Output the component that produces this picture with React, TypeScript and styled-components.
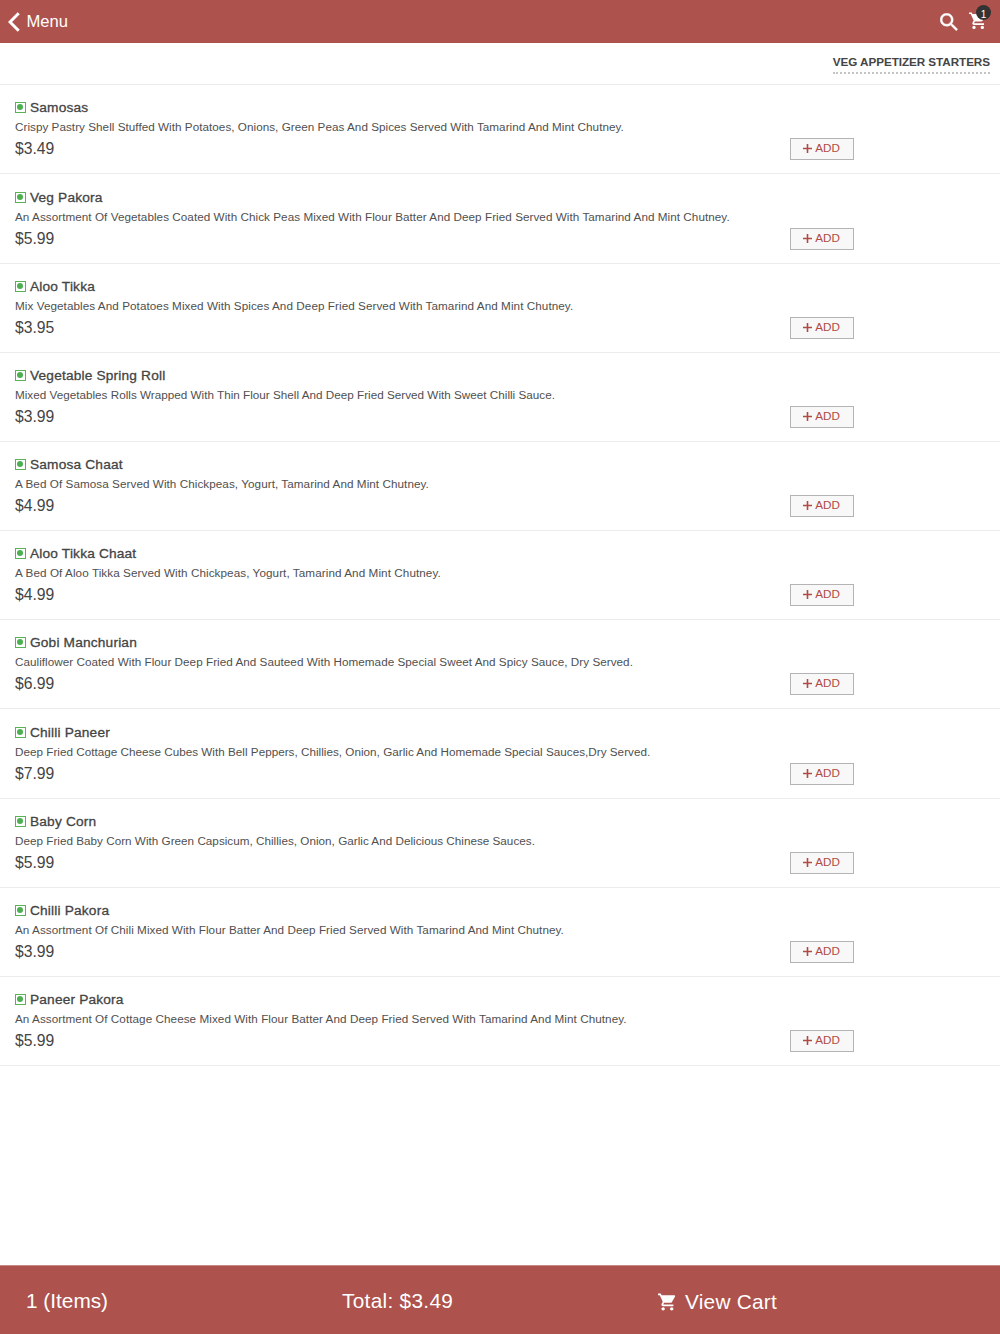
import React from "react";
import styled, { createGlobalStyle } from "styled-components";

const GlobalStyle = createGlobalStyle`
  * { box-sizing: border-box; }
  body {
    margin: 0;
    background: #fff;
    color: #444;
    font-family: "Liberation Sans", Arial, Helvetica, sans-serif;
  }
  button { font-family: inherit; }
`;

const Screen = styled.div`
  display: flex;
  flex-direction: column;
  width: 1000px;
  height: 1334px;
  background: #fff;
`;

const TopBar = styled.header`
  display: flex;
  align-items: center;
  justify-content: space-between;
  flex: none;
  height: 43px;
  padding: 0 13px 0 8px;
  background: #ad524c;
  color: #fff;
`;

const BackLink = styled.button`
  display: flex;
  align-items: center;
  gap: 6.5px;
  padding: 0;
  border: 0;
  background: none;
  color: inherit;
  font-size: 16.6px;
  line-height: 20px;
`;

const Actions = styled.div`
  display: flex;
  align-items: center;
  gap: 11px;
`;

const CartHolder = styled.div`
  position: relative;
  display: flex;
  width: 18px;
  margin-top: -2px;
`;

const Badge = styled.span`
  position: absolute;
  top: -7px;
  right: -4px;
  width: 15px;
  height: 15px;
  border-radius: 50%;
  background: #333;
  color: #fff;
  font-size: 10px;
  line-height: 19px;
  text-align: center;
`;

const CategoryBar = styled.div`
  display: flex;
  justify-content: flex-end;
  align-items: flex-start;
  flex: none;
  height: 42px;
  padding: 11px 10px 0;
  border-bottom: 1px solid #ececec;
`;

const Category = styled.h1`
  margin: 0;
  padding-bottom: 3px;
  border-bottom: 2px dotted #c4c4c4;
  font-size: 11.7px;
  font-weight: 700;
  letter-spacing: -0.06px;
  line-height: 15px;
  white-space: nowrap;
`;

const Items = styled.ul`
  flex: 1;
  margin: 0;
  padding: 0;
  list-style: none;
`;

const Item = styled.li`
  display: flex;
  height: 89px;
  padding: 14px 15px 0;
  border-bottom: 1px solid #ececec;

  &:nth-child(6n + 2) {
    height: 90px;
    padding-top: 15px;
  }
`;

const Details = styled.div`
  flex: none;
  width: 775px;
  white-space: nowrap;
`;

const NameLine = styled.div`
  display: flex;
  align-items: center;
  gap: 4px;
  height: 18px;
`;

const VegMark = styled.span`
  display: flex;
  width: 11px;
  height: 11px;
  margin-top: -2px;
  padding: 1px;
  border: 1px solid #59b255;
  &::after {
    content: "";
    width: 6px;
    height: 6px;
    border-radius: 50%;
    background: #4caf50;
  }
`;

const Name = styled.h2`
  margin: 0;
  font-size: 13.7px;
  font-weight: 400;
  letter-spacing: 0.18px;
  line-height: 18px;
  -webkit-text-stroke: 0.3px #444;
`;

const Description = styled.p<{ $tracking: number }>`
  margin: 1px 0 0;
  color: #505050;
  font-size: 11.7px;
  letter-spacing: ${(p) => p.$tracking}px;
  line-height: 17px;
`;

const Price = styled.div`
  margin-top: 5px;
  font-size: 15.7px;
  line-height: 18px;
`;

const AddButton = styled.button`
  display: flex;
  align-items: center;
  justify-content: center;
  gap: 3px;
  width: 64px;
  height: 22px;
  margin-top: 39px;
  padding: 0 1px 2px 0;
  border: 1px solid #b4b4b4;
  background: #f8f8f8;
  color: #b04a45;
  font-size: 11.7px;
  line-height: 18px;
`;

const BottomBar = styled.footer`
  display: grid;
  grid-template-columns: 316px 316px 1fr;
  align-items: center;
  flex: none;
  height: 69px;
  padding: 2px 26px 0;
  border-top: 1px solid #c78984;
  background: #ad524c;
  color: #fff;
  font-size: 20.8px;
`;

const Total = styled.span`
  letter-spacing: 0.3px;
`;

const ViewCart = styled.div`
  display: flex;
  align-items: center;
  gap: 9px;
  padding-top: 1px;
  letter-spacing: 0.25px;
`;

const CartIcon = ({ size }: { size: number }) => (
  <svg width={size} height={size} viewBox="1 2 21 20" fill="currentColor">
    <path d="M7 18c-1.1 0-1.99.9-1.99 2S5.9 22 7 22s2-.9 2-2-.9-2-2-2zM1 2v2h2l3.6 7.59-1.35 2.45c-.16.28-.25.61-.25.96 0 1.1.9 2 2 2h12v-2H7.42c-.14 0-.25-.11-.25-.25l.03-.12.9-1.63h7.45c.75 0 1.41-.41 1.75-1.03l3.58-6.49c.08-.14.12-.31.12-.48 0-.55-.45-1-1-1H5.21l-.94-2H1zm16 16c-1.1 0-1.99.9-1.99 2s.89 2 1.99 2 2-.9 2-2-.9-2-2-2z" />
  </svg>
);

const SearchIcon = () => (
  <svg width="18" height="18" viewBox="2.8 2.8 18 18" fill="currentColor" stroke="currentColor" strokeWidth="0.4">
    <path d="M15.5 14h-.79l-.28-.27C15.41 12.59 16 11.11 16 9.5 16 5.91 13.09 3 9.5 3S3 5.91 3 9.5 5.91 16 9.5 16c1.61 0 3.09-.59 4.23-1.57l.27.28v.79l5 4.99L20.49 19l-4.99-5zm-6 0C7.01 14 5 11.99 5 9.5S7.01 5 9.5 5 14 7.01 14 9.5 11.99 14 9.5 14z" />
  </svg>
);

const BackIcon = () => (
  <svg width="12" height="20" viewBox="0 0 12 20" fill="none" stroke="currentColor" strokeWidth="3">
    <path d="M10.7 1.2 2 10l8.7 8.8" />
  </svg>
);

const PlusIcon = () => (
  <svg width="9" height="9" viewBox="0 0 9 9" stroke="currentColor" strokeWidth="1.6">
    <path d="M4.5 0v9M0 4.5h9" />
  </svg>
);

const menu = [
  { name: "Samosas", price: "$3.49", tracking: 0.036, text: "Crispy Pastry Shell Stuffed With Potatoes, Onions, Green Peas And Spices Served With Tamarind And Mint Chutney." },
  { name: "Veg Pakora", price: "$5.99", tracking: 0.05, text: "An Assortment Of Vegetables Coated With Chick Peas Mixed With Flour Batter And Deep Fried Served With Tamarind And Mint Chutney." },
  { name: "Aloo Tikka", price: "$3.95", tracking: 0.065, text: "Mix Vegetables And Potatoes Mixed With Spices And Deep Fried Served With Tamarind And Mint Chutney." },
  { name: "Vegetable Spring Roll", price: "$3.99", tracking: 0.012, text: "Mixed Vegetables Rolls Wrapped With Thin Flour Shell And Deep Fried Served With Sweet Chilli Sauce." },
  { name: "Samosa Chaat", price: "$4.99", tracking: 0.06, text: "A Bed Of Samosa Served With Chickpeas, Yogurt, Tamarind And Mint Chutney." },
  { name: "Aloo Tikka Chaat", price: "$4.99", tracking: 0.077, text: "A Bed Of Aloo Tikka Served With Chickpeas, Yogurt, Tamarind And Mint Chutney." },
  { name: "Gobi Manchurian", price: "$6.99", tracking: 0.037, text: "Cauliflower Coated With Flour Deep Fried And Sauteed With Homemade Special Sweet And Spicy Sauce, Dry Served." },
  { name: "Chilli Paneer", price: "$7.99", tracking: 0.016, text: "Deep Fried Cottage Cheese Cubes With Bell Peppers, Chillies, Onion, Garlic And Homemade Special Sauces,Dry Served." },
  { name: "Baby Corn", price: "$5.99", tracking: 0.016, text: "Deep Fried Baby Corn With Green Capsicum, Chillies, Onion, Garlic And Delicious Chinese Sauces." },
  { name: "Chilli Pakora", price: "$3.99", tracking: 0.056, text: "An Assortment Of Chili Mixed With Flour Batter And Deep Fried Served With Tamarind And Mint Chutney." },
  { name: "Paneer Pakora", price: "$5.99", tracking: 0.06, text: "An Assortment Of Cottage Cheese Mixed With Flour Batter And Deep Fried Served With Tamarind And Mint Chutney." },
];

export default function App() {
  return (
    <Screen>
      <GlobalStyle />
      <TopBar>
        <BackLink><BackIcon />Menu</BackLink>
        <Actions>
          <SearchIcon />
          <CartHolder>
            <CartIcon size={17.5} />
            <Badge>1</Badge>
          </CartHolder>
        </Actions>
      </TopBar>
      <CategoryBar><Category>VEG APPETIZER STARTERS</Category></CategoryBar>
      <Items>
        {menu.map((item) => (
          <Item key={item.name}>
            <Details>
              <NameLine><VegMark /><Name>{item.name}</Name></NameLine>
              <Description $tracking={item.tracking}>{item.text}</Description>
              <Price>{item.price}</Price>
            </Details>
            <AddButton><PlusIcon />ADD</AddButton>
          </Item>
        ))}
      </Items>
      <BottomBar>
        <span>1 (Items)</span>
        <Total>Total: $3.49</Total>
        <ViewCart><CartIcon size={18} />View Cart</ViewCart>
      </BottomBar>
    </Screen>
  );
}
